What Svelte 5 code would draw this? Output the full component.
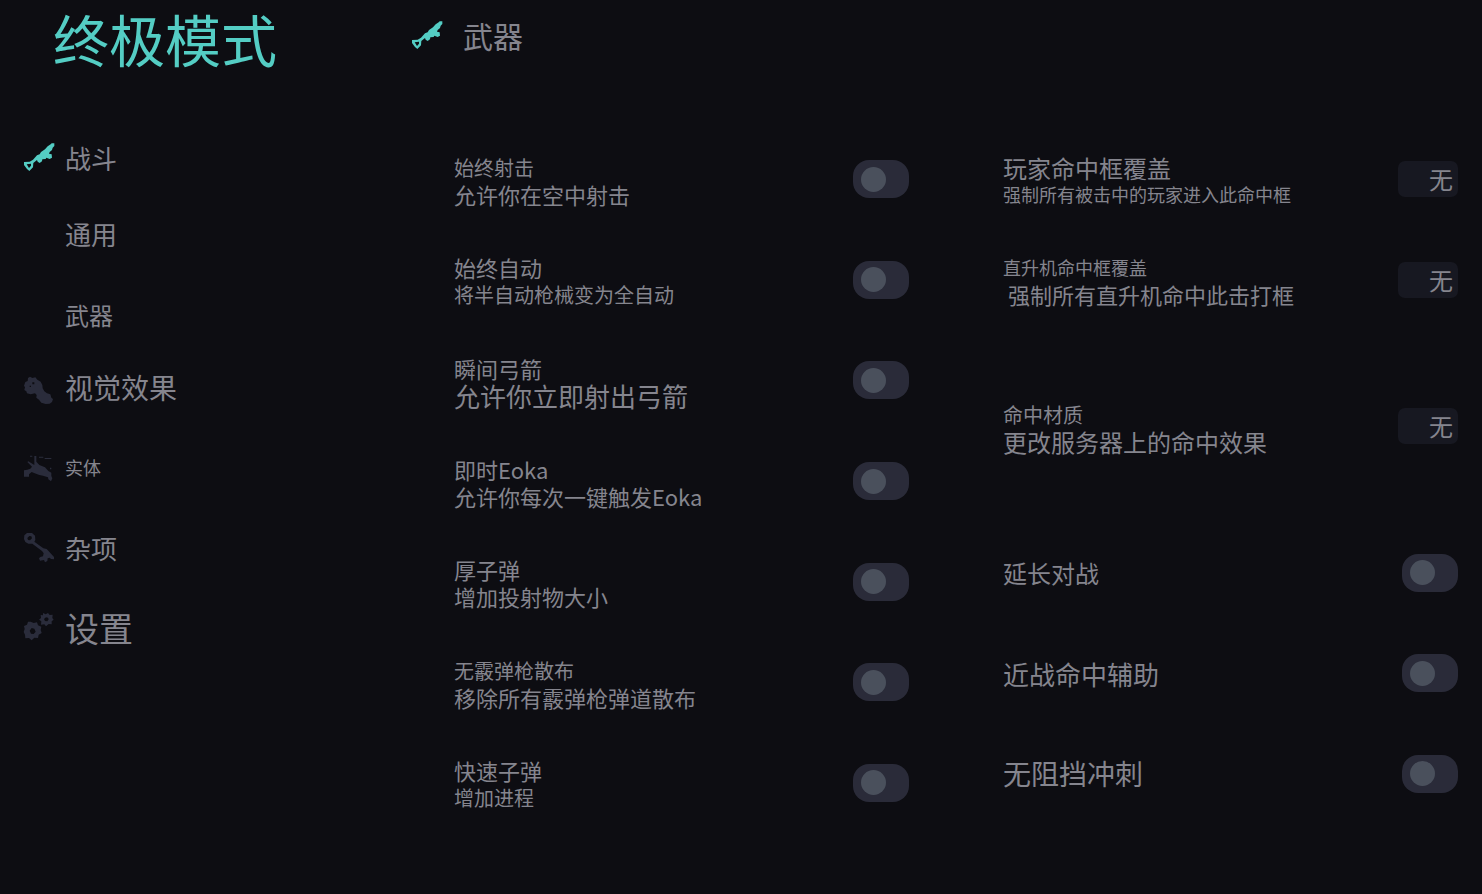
<script lang="ts">
  type Option = {
    id: string;
    title: string;
    titleSize: string;
    text?: string;
    textSize?: string;
    kind: 'toggle' | 'select';
    spaced?: boolean;
  };

  const sections = [
    {
      icon: 'rifle',
      label: '战斗',
      size: 'l',
      active: true,
      children: [
        { label: '通用', size: 'l' },
        { label: '武器', size: 'm' }
      ]
    },
    { icon: 'mask', label: '视觉效果', size: 'xl' },
    { icon: 'entity', label: '实体', size: 'xs' },
    { icon: 'key', label: '杂项', size: 'l' },
    { icon: 'gears', label: '设置', size: 'xxl' }
  ];

  const weapon: Option[] = [
    { id: 'always-shoot', title: '始终射击', titleSize: 's', text: '允许你在空中射击', textSize: 'n', kind: 'toggle' },
    { id: 'always-auto', title: '始终自动', titleSize: 'n', text: '将半自动枪械变为全自动', textSize: 's', kind: 'toggle' },
    { id: 'instant-bow', title: '瞬间弓箭', titleSize: 'n', text: '允许你立即射出弓箭', textSize: 'l', kind: 'toggle' },
    { id: 'instant-eoka', title: '即时Eoka', titleSize: 'n', text: '允许你每次一键触发Eoka', textSize: 'n', kind: 'toggle' },
    { id: 'thick-bullet', title: '厚子弹', titleSize: 'n', text: '增加投射物大小', textSize: 'n', kind: 'toggle' },
    { id: 'no-spread', title: '无霰弹枪散布', titleSize: 's', text: '移除所有霰弹枪弹道散布', textSize: 'n', kind: 'toggle' },
    { id: 'fast-bullet', title: '快速子弹', titleSize: 'n', text: '增加进程', textSize: 's', kind: 'toggle' }
  ];

  const hits: Option[] = [
    { id: 'player-hitbox', title: '玩家命中框覆盖', titleSize: 'm', text: '强制所有被击中的玩家进入此命中框', textSize: 'xs', kind: 'select' },
    { id: 'heli-hitbox', title: '直升机命中框覆盖', titleSize: 'xs', text: '\u00a0强制所有直升机命中此击打框', textSize: 'n', kind: 'select' },
    { id: 'hit-material', title: '命中材质', titleSize: 's', text: '更改服务器上的命中效果', textSize: 'm', kind: 'select', spaced: true },
    { id: 'long-melee', title: '延长对战', titleSize: 'm', kind: 'toggle' },
    { id: 'melee-assist', title: '近战命中辅助', titleSize: 'l', kind: 'toggle' },
    { id: 'no-block-sprint', title: '无阻挡冲刺', titleSize: 'xl', kind: 'toggle' }
  ];

  let enabled = $state<Record<string, boolean>>({});
</script>

{#snippet icon(name: string)}
  <svg class="icon" viewBox="0 0 90 84" aria-hidden="true">
    {#if name === 'rifle'}
      <path
        fill-rule="evenodd"
        d="M80 4L83 1H91V9L86 14L84 21L77 27L75 32L83 34L84 44L77 48L67 44L65 48L55 49L54 55L47 60L41 56L39 51L28 60L27 73L16 84L9 78L0 66V57L17 56L27 50L39 37L47 34L51 27L63 19L71 10ZM8 64L15 75L21 68V62Z"
      />
    {:else if name === 'mask'}
      <path
        transform="translate(0 12)"
        fill-rule="evenodd"
        d="M12 3L18 -1L25 3L34 1L40 8L50 14L55 24L56 34L61 43L69 49L79 52L82 62L87 66L84 75L77 80L65 81L52 77L45 68L37 62L38 54L33 49L20 52L9 49L7 43L1 39L3 31L0 26L4 15L11 12ZM25 16V22H31V16ZM17 26V30H21V26Z"
      />
    {:else if name === 'entity'}
      <path
        transform="translate(0 6)"
        d="M18 2h7v3h-7zM31 3h6v17l9 10 17 7 10 11 9 5v10l3 7-4 9-8-6-1-6-15-5-11-2-14-5-9-4-8 7v7H0V46l10-2 9-3 5-6-14-14 3-2 7 4 11 7zM45 5h13v3H45zM62 9h20v3H62zM78 38h4v5h-4z"
      />
    {:else if name === 'key'}
      <path
        fill-rule="evenodd"
        d="M9 0H24L33 8L34 21L31 26L58 46L68 48L77 58L90 72V79L81 78L77 74L71 76L70 84L63 88L60 81L48 83L45 76L49 72L57 70L59 61L54 54L25 32L13 32L4 27L0 18L1 7ZM16 9L10 15L12 21L18 22L24 16L22 10Z"
      />
    {:else if name === 'gears'}
      <path
        fill-rule="evenodd"
        d="M57 0l8 4 7-4 5 6 9-1-1 10 4 5-6 5v9l-9-1-8 7-5-6-10 1 1-10-7-5 6-5-1-9 7 1zM66 13l-6 5 3 6 7 1 4-6-2-5z"
      />
      <path
        fill-rule="evenodd"
        d="M20 26l9 4 10-2 3 9 10 4-2 10 3 9-9 5-2 10-11-1-8 8-8-7-11 1-1-11-4-8 3-9-2-9 9-4 3-9zM23 45l-6 8 4 9 8 1 6-7-4-9z"
      />
    {/if}
  </svg>
{/snippet}

{#snippet row(item: Option)}
  <li class="row" class:spaced={item.spaced}>
    <label class="caption" class:double={item.text} for={item.id}>
      <span class={item.titleSize}>{item.title}</span>
      {#if item.text}
        <span class={item.textSize}>{item.text}</span>
      {/if}
    </label>
    {#if item.kind === 'toggle'}
      <input class="toggle" type="checkbox" role="switch" id={item.id} bind:checked={enabled[item.id]} />
    {:else}
      <select class="picker m" id={item.id}>
        <option>无</option>
      </select>
    {/if}
  </li>
{/snippet}

<div class="menu">
  <aside>
    <h1>终极模式</h1>
    <nav>
      {#each sections as section}
        <a class="item {section.size}" class:active={section.active} href="#{section.icon}">
          {@render icon(section.icon)}
          <span>{section.label}</span>
        </a>
        {#if section.children}
          <div class="children">
            {#each section.children as child}
              <a class="child {child.size}" href="#{section.icon}">{child.label}</a>
            {/each}
          </div>
        {/if}
      {/each}
    </nav>
  </aside>

  <main>
    <header class="active">
      {@render icon('rifle')}
      <h2>武器</h2>
    </header>
    <div class="columns">
      <ul>
        {#each weapon as item (item.id)}
          {@render row(item)}
        {/each}
      </ul>
      <ul class="hits">
        {#each hits as item (item.id)}
          {@render row(item)}
        {/each}
      </ul>
    </div>
  </main>
</div>

<style>
  :global(body) {
    margin: 0;
    background: #0d0d12;
  }

  .menu {
    display: grid;
    grid-template-columns: 412px 1fr;
    min-height: 100vh;
    background: #0d0d12;
    color: #85858e;
    font-family: 'Noto Sans CJK SC', sans-serif;
  }

  h1,
  h2,
  ul {
    margin: 0;
    padding: 0;
    font-weight: 400;
    list-style: none;
  }

  a {
    color: inherit;
    text-decoration: none;
  }

  .xs { font-size: 18px; }
  .s { font-size: 20px; }
  .n { font-size: 22px; }
  .m { font-size: 24px; }
  .l { font-size: 26px; }
  .xl { font-size: 28px; }
  .xxl { font-size: 34px; }

  h1 {
    padding-left: 53px;
    margin-bottom: 41px;
    color: #54cdc4;
    font-size: 56px;
    line-height: 76px;
  }

  nav {
    display: flex;
    flex-direction: column;
  }

  .item {
    display: flex;
    align-items: center;
    gap: 11px;
    height: 80px;
    padding-left: 24px;
  }

  .icon {
    flex: none;
    width: 30px;
    height: 28px;
    fill: #2a2c3b;
    overflow: visible;
  }

  .active .icon {
    fill: #54cdc4;
  }

  .children {
    display: flex;
    flex-direction: column;
    gap: 17px;
    padding: 5px 0 0 65px;
  }

  .child {
    line-height: 64px;
  }

  main {
    display: flex;
    flex-direction: column;
    padding-bottom: 61px;
  }

  header {
    display: flex;
    align-items: center;
    gap: 21px;
    height: 70px;
    margin-bottom: 59px;
  }

  h2 {
    font-size: 30px;
  }

  .columns {
    flex: 1;
    display: grid;
    grid-template-columns: 1fr 1fr;
    gap: 94px;
    padding: 0 24px 0 42px;
  }

  ul {
    display: flex;
    flex-direction: column;
  }

  .hits {
    padding-bottom: 9px;
  }

  .row {
    flex: 1;
    display: flex;
    align-items: center;
    justify-content: space-between;
  }

  .spaced {
    margin: 46px 0;
  }

  .caption {
    display: flex;
    flex-direction: column;
    line-height: 27px;
    white-space: nowrap;
  }

  .double {
    padding-top: 3px;
  }

  .toggle {
    appearance: none;
    display: flex;
    align-items: center;
    width: 56px;
    height: 38px;
    margin: 0;
    padding: 0 8px;
    box-sizing: border-box;
    border-radius: 16px;
    background: #2a2b39;
  }

  .toggle::before {
    content: '';
    width: 25px;
    height: 25px;
    border-radius: 50%;
    background: #4a505c;
  }

  .toggle:checked {
    justify-content: flex-end;
  }

  .toggle:checked::before {
    background: #54cdc4;
  }

  .picker {
    appearance: none;
    width: 60px;
    height: 36px;
    padding: 0 4px 2px 31px;
    border: 0;
    border-radius: 7px;
    background: #171821;
    color: inherit;
    font-family: inherit;
  }
</style>
